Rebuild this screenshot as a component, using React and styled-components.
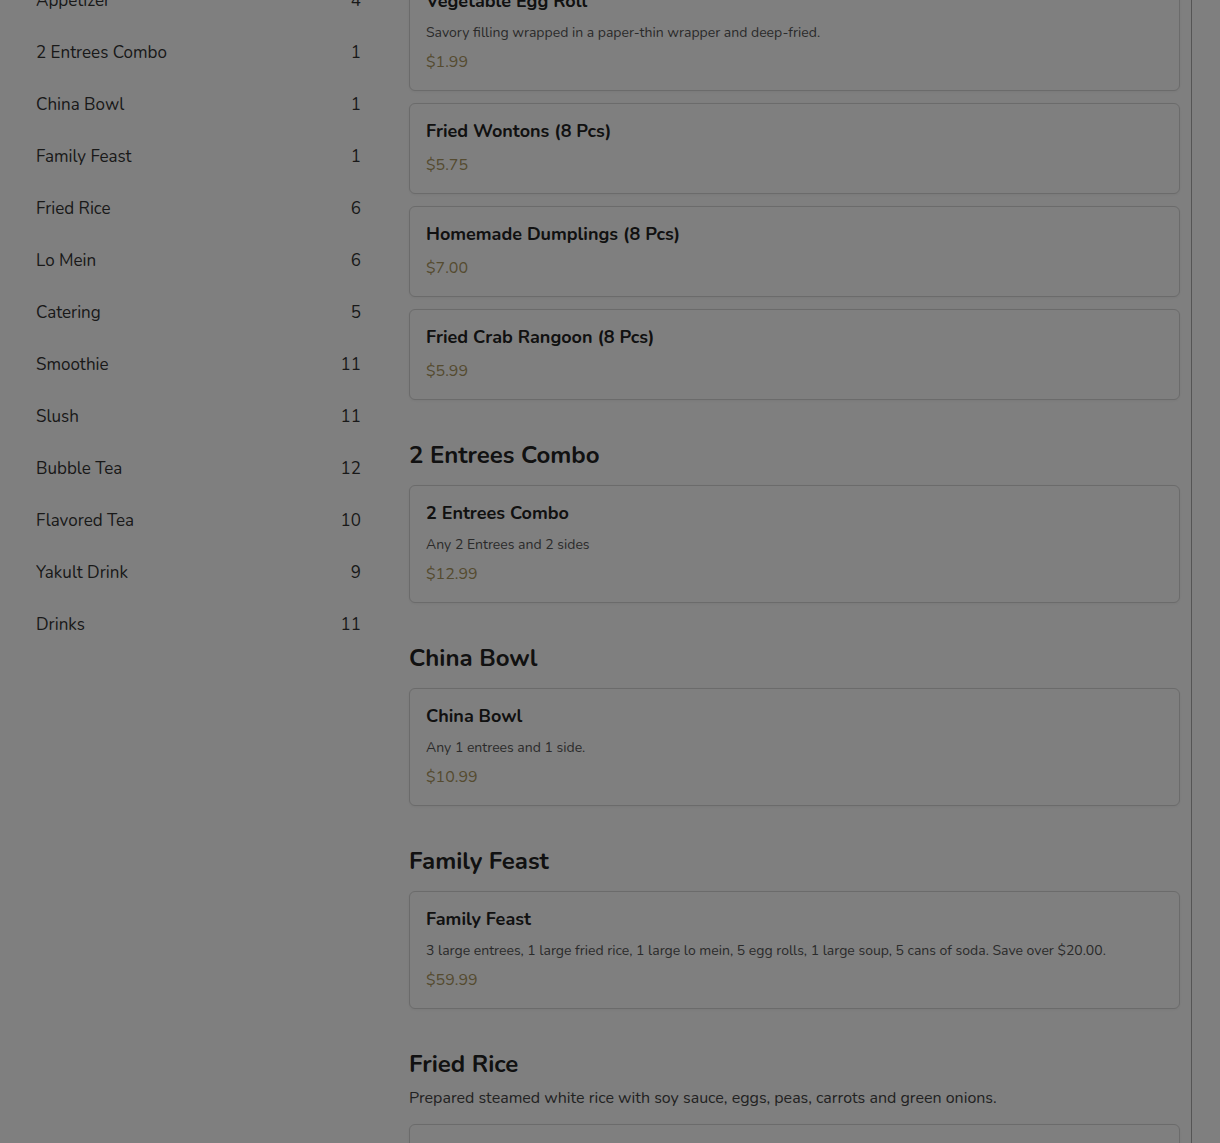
import { useLayoutEffect } from "react";
import styled, { createGlobalStyle } from "styled-components";

const GlobalStyle = createGlobalStyle`
  html {
    scrollbar-width: none;
  }
  html::-webkit-scrollbar {
    display: none;
  }
  body {
    margin: 0;
    background: #ffffff;
    font-family: "Nunito", Lato, "Noto Sans", sans-serif;
    color: #222222;
  }
  * {
    box-sizing: border-box;
  }
`;

const categories = [
  { name: "Appetizer", count: 4 },
  { name: "2 Entrees Combo", count: 1 },
  { name: "China Bowl", count: 1 },
  { name: "Family Feast", count: 1 },
  { name: "Fried Rice", count: 6 },
  { name: "Lo Mein", count: 6 },
  { name: "Catering", count: 5 },
  { name: "Smoothie", count: 11 },
  { name: "Slush", count: 11 },
  { name: "Bubble Tea", count: 12 },
  { name: "Flavored Tea", count: 10 },
  { name: "Yakult Drink", count: 9 },
  { name: "Drinks", count: 11 },
];

const sections = [
  {
    title: "Appetizer",
    items: [
      { name: "Vegetable Egg Roll", desc: "Savory filling wrapped in a paper-thin wrapper and deep-fried.", price: "$1.99" },
      { name: "Fried Wontons (8 Pcs)", price: "$5.75" },
      { name: "Homemade Dumplings (8 Pcs)", price: "$7.00" },
      { name: "Fried Crab Rangoon (8 Pcs)", price: "$5.99" },
    ],
  },
  {
    title: "2 Entrees Combo",
    items: [{ name: "2 Entrees Combo", desc: "Any 2 Entrees and 2 sides", price: "$12.99" }],
  },
  {
    title: "China Bowl",
    items: [{ name: "China Bowl", desc: "Any 1 entrees and 1 side.", price: "$10.99" }],
  },
  {
    title: "Family Feast",
    items: [
      {
        name: "Family Feast",
        desc: "3 large entrees, 1 large fried rice, 1 large lo mein, 5 egg rolls, 1 large soup, 5 cans of soda. Save over $20.00.",
        price: "$59.99",
      },
    ],
  },
  {
    title: "Fried Rice",
    desc: "Prepared steamed white rice with soy sauce, eggs, peas, carrots and green onions.",
    items: [
      { name: "Vegetable Fried Rice", price: "$8.99" },
      { name: "Chicken Fried Rice", price: "$9.99" },
      { name: "Pork Fried Rice", price: "$9.99" },
      { name: "Beef Fried Rice", price: "$10.99" },
      { name: "Shrimp Fried Rice", price: "$10.99" },
      { name: "House Special Fried Rice", price: "$11.99" },
    ],
  },
];

const Banner = styled.header`
  height: 160px;
  display: flex;
  align-items: center;
  padding: 0 36px;
  border-bottom: 1px solid #e5e5e5;
  font-size: 28px;
  font-weight: 700;
`;

const Layout = styled.div`
  width: 1192px;
  display: flex;
  gap: 48px;
  padding: 24px 11px 60px 36px;
  border-right: 1px solid #aaaaaa;
`;

const Sidebar = styled.aside`
  width: 325px;
  flex: none;
`;

const SidebarTitle = styled.h3`
  margin: 0 0 15px;
  font-size: 20px;
  line-height: 32px;
  font-weight: 700;
`;

const CategoryRow = styled.div`
  height: 52px;
  display: flex;
  align-items: center;
  justify-content: space-between;
  font-size: 17px;
  color: #333333;
`;

const Main = styled.main`
  width: 771px;
  display: flex;
  flex-direction: column;
  gap: 39px;
`;

const SectionHead = styled.div`
  margin-bottom: 14px;
`;

const SectionTitle = styled.h2`
  margin: 0;
  font-size: 24px;
  line-height: 32px;
  font-weight: 700;
  color: #222222;
`;

const SectionDesc = styled.p`
  margin: 6px 0 6px;
  font-size: 16px;
  line-height: 24px;
  color: #444444;
`;

const CardList = styled.div`
  display: flex;
  flex-direction: column;
  gap: 12px;
`;

const Card = styled.div`
  background: #ffffff;
  border: 1px solid #d6d6d6;
  border-radius: 6px;
  padding: 16px;
  box-shadow: 0 1px 3px rgba(0, 0, 0, 0.06);
`;

const ItemName = styled.h4`
  margin: 0 0 11px;
  font-size: 18px;
  line-height: 22px;
  font-weight: 700;
  color: #222222;
`;

const ItemDesc = styled.p`
  margin: 0 0 8px;
  font-size: 14px;
  line-height: 19px;
  color: #555555;
`;

const Price = styled.div`
  font-size: 16px;
  line-height: 24px;
  color: #aa9660;
`;

const Backdrop = styled.div`
  position: fixed;
  inset: 0;
  background: rgba(0, 0, 0, 0.5);
`;

export default function App() {
  useLayoutEffect(() => {
    window.scrollTo(0, 257);
  }, []);

  return (
    <>
      <GlobalStyle />
      <Banner>China Bowl</Banner>
      <Layout>
        <Sidebar>
          <SidebarTitle>Menu</SidebarTitle>
          {categories.map((c) => (
            <CategoryRow key={c.name}>
              <span>{c.name}</span>
              <span>{c.count}</span>
            </CategoryRow>
          ))}
        </Sidebar>
        <Main>
          {sections.map((s) => (
            <section key={s.title}>
              <SectionHead>
                <SectionTitle>{s.title}</SectionTitle>
                {s.desc && <SectionDesc>{s.desc}</SectionDesc>}
              </SectionHead>
              <CardList>
                {s.items.map((item) => (
                  <Card key={item.name}>
                    <ItemName>{item.name}</ItemName>
                    {item.desc && <ItemDesc>{item.desc}</ItemDesc>}
                    <Price>{item.price}</Price>
                  </Card>
                ))}
              </CardList>
            </section>
          ))}
        </Main>
      </Layout>
      <Backdrop />
    </>
  );
}
